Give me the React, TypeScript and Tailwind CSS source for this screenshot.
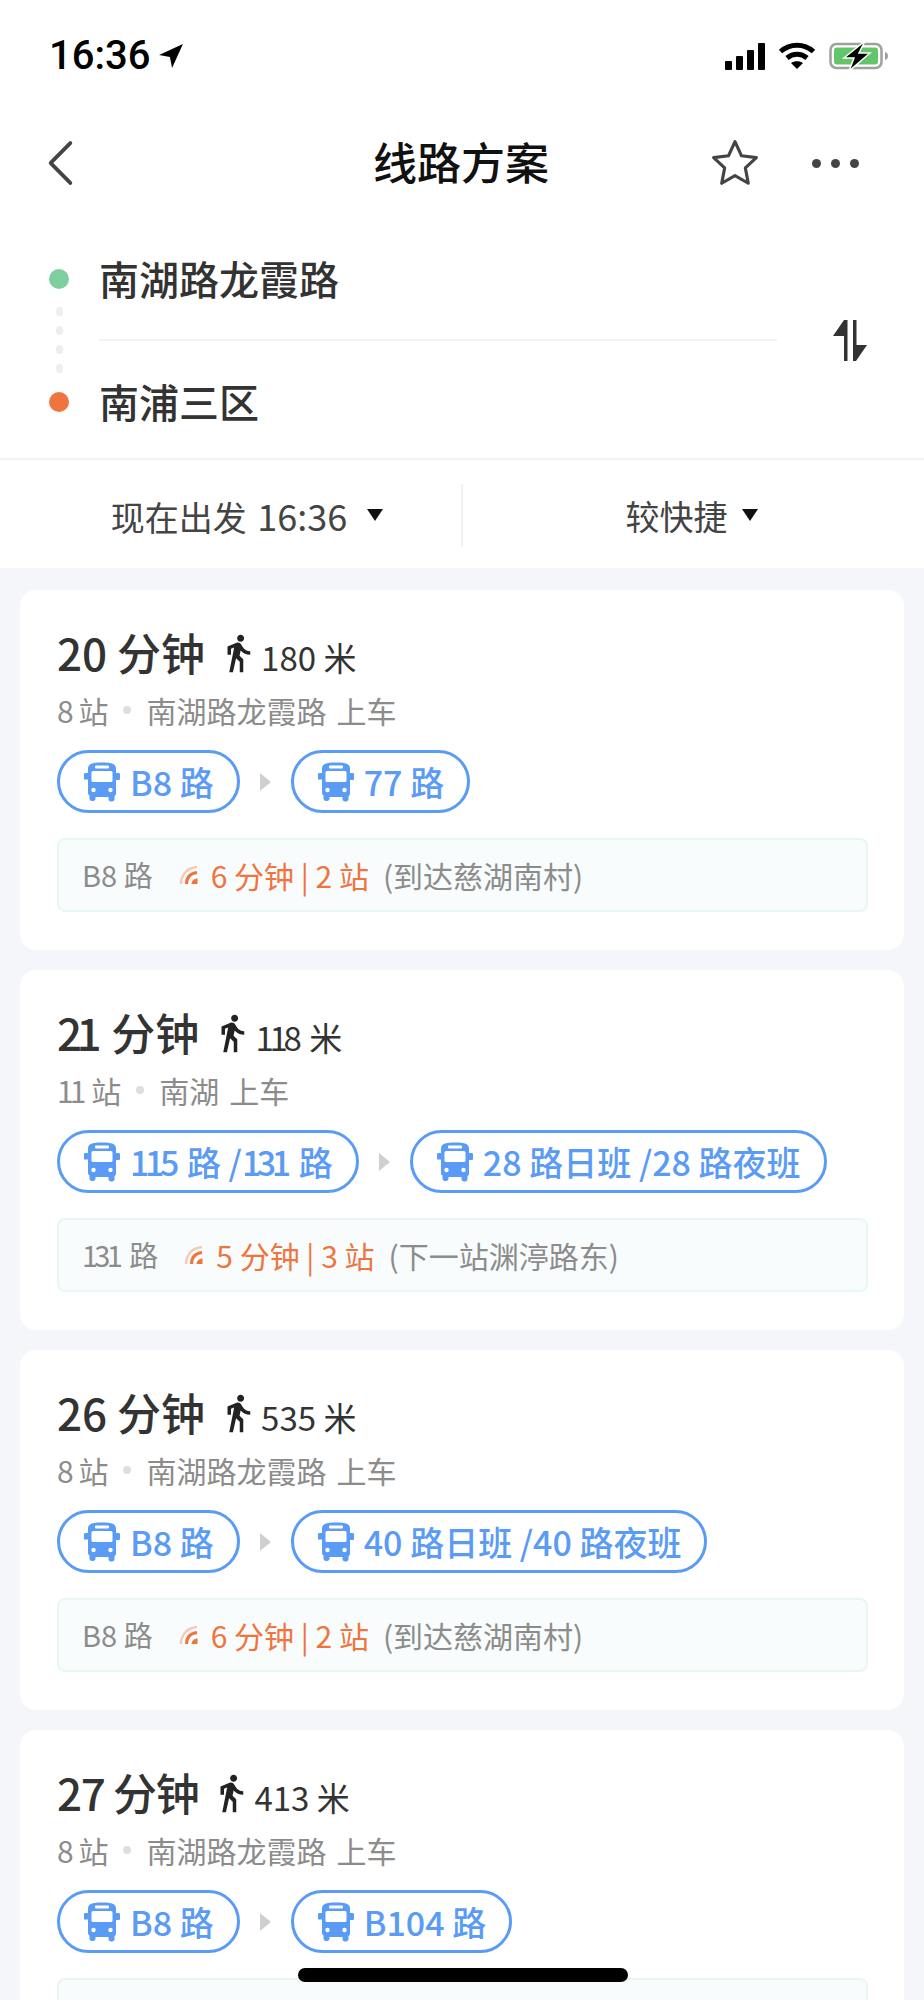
import { MdDirectionsWalk } from "react-icons/md";

type Plan = {
  mins: string;
  walk: string;
  stops: string;
  from: string;
  lines: string[];
  line: string;
  eta: string;
  etaStops: string;
  note: string;
  // the reference font sets these digits narrower than Noto's tabular ones
  tight?: boolean;
  minsClass?: string;
};

const plans: Plan[] = [
  { mins: "20", walk: "180", stops: "8", from: "南湖路龙霞路", lines: ["B8 路", "77 路"], line: "B8 路", eta: "6", etaStops: "2", note: "(到达慈湖南村)" },
  { mins: "21", walk: "118", stops: "11", from: "南湖", lines: ["115 路 /131 路", "28 路日班 /28 路夜班"], line: "131 路", eta: "5", etaStops: "3", note: "(下一站渊渟路东)", tight: true },
  { mins: "26", walk: "535", stops: "8", from: "南湖路龙霞路", lines: ["B8 路", "40 路日班 /40 路夜班"], line: "B8 路", eta: "6", etaStops: "2", note: "(到达慈湖南村)" },
  { mins: "27", walk: "413", stops: "8", from: "南湖路龙霞路", lines: ["B8 路", "B104 路"], line: "", eta: "", etaStops: "", note: "", minsClass: "tracking-[-0.03em]" },
];

function Digits({ text, tight }: { text: string; tight?: boolean }) {
  if (!tight) return <>{text}</>;
  return (
    <>
      {text.split(/(\d(?=1)|1(?=\d))/).map((part, i) =>
        i % 2 === 1 ? (
          <span key={i} className="tracking-[-0.13em]">{part}</span>
        ) : (
          part
        ),
      )}
    </>
  );
}

const BusIcon = () => (
  <svg viewBox="0 0 40 40" className="h-10 w-10 shrink-0" fill="#5a9bf6">
    <path d="M8 2.500C10 1 14 .5 20 .5s10 .5 12 2c1.500 1 2 2.500 2 4.500v4h2.500c1 0 1.500.6 1.500 1.500v4c0 1-.5 1.500-1.500 1.500H34v13c0 1.500-.5 2.500-1.500 3v3c0 1.500-1 2.500-2.500 2.500h-1c-1.500 0-2.500-1-2.500-2.500V35h-13v1.500c0 1.500-1 2.500-2.500 2.500h-1c-1.500 0-2.500-1-2.500-2.500v-3c-1-.5-1.500-1.500-1.500-3v-13H3.500C2.500 18 2 17.500 2 16.500v-4c0-.9.5-1.500 1.500-1.500H6V7c0-2 .5-3.500 2-4.500z" />
    <rect x="9.500" y="9" width="21" height="11" rx="1.500" fill="#fff" />
    <rect x="13" y="3.500" width="14" height="3" rx="1" fill="#fff" />
    <circle cx="11.500" cy="28" r="2.200" fill="#fff" />
    <circle cx="28.500" cy="28" r="2.200" fill="#fff" />
  </svg>
);

const LiveIcon = () => (
  <svg viewBox="0 0 20 20" className="h-5 w-5 shrink-0" fill="none">
    <path d="M2 19C2 10 8 3 18 2" stroke="#f6cbb6" strokeWidth="2.500" />
    <path d="M7.500 19C7.500 13 11 8.500 18 7.500" stroke="#f0743e" strokeWidth="3" />
    <path d="M12.500 19c0-3 2.500-5.500 6-5.500V19z" fill="#f0743e" />
  </svg>
);

function Card({ plan }: { plan: Plan }) {
  return (
    <div className="h-[360px] rounded-2xl bg-white pl-[37px] pr-9 pt-[37px]">
      <div className="flex h-[50px] items-center text-[#333]">
        <span className={`text-[44px] font-medium leading-[50px] ${plan.minsClass ?? ""}`}>
          <Digits text={plan.mins} tight={plan.tight} /> 分钟
        </span>
        <MdDirectionsWalk className="ml-[12px] mt-[2px] h-[42px] w-[42px] text-[#222]" />
        <span className="ml-[2px] mt-[10px] text-[33px] leading-[50px]">
          <Digits text={plan.walk} tight={plan.tight} /> 米
        </span>
      </div>
      <div className="mt-[15px] flex h-[36px] items-center text-[30px] leading-[36px] text-[#8c8c8c]">
        <span className="[word-spacing:-2px]">
          <Digits text={plan.stops} tight={plan.tight} /> 站
        </span>
        <span className="mx-[15px] h-2 w-2 rounded-full bg-[#dedede]" />
        <span>{plan.from}</span>
        <span className="ml-[10px]">上车</span>
      </div>
      <div className="mt-[22px] flex h-[63px] items-center">
        {plan.lines.map((name, i) => (
          <div key={name} className="flex items-center">
            {i > 0 && (
              <span className="mx-[20px] h-0 w-0 border-y-[9px] border-l-[11px] border-y-transparent border-l-[#cfcfcf]" />
            )}
            <div className="flex h-[63px] items-center gap-[8px] whitespace-nowrap rounded-full border-[3px] border-[#5a9bf6] pl-[22px] pr-[23px] text-[34px] font-medium text-[#5a9bf6]">
              <BusIcon />
              <span>
                <Digits text={name} tight={plan.tight} />
              </span>
            </div>
          </div>
        ))}
      </div>
      <div className="mt-[25px] flex h-[74px] items-center rounded-lg border-2 border-[#e9f7f3] bg-[#f8fcfc] pl-[23px] text-[29px] text-[#8c8c8c]">
        {plan.line && (
          <>
            <span>
              <Digits text={plan.line} tight={plan.tight} />
            </span>
            <span className="ml-[26px] mr-[12px]"><LiveIcon /></span>
            <span className="text-[30px] text-[#f0743e]">{plan.eta} 分钟 | {plan.etaStops} 站</span>
            <span className="ml-[14px] text-[30px]">{plan.note}</span>
          </>
        )}
      </div>
    </div>
  );
}

export default function App() {
  return (
    <div className="relative h-[2000px] w-[924px] overflow-hidden bg-[#f5f6fa] font-['Noto_Sans_CJK_SC',sans-serif]">
      <div className="bg-white">
        {/* status bar */}
        <div className="flex h-[110px] items-center justify-between pl-[49px] pr-[35px] pt-[2px]">
          <div className="flex items-center gap-[8px]">
            <span className="font-['Roboto',sans-serif] text-[40px] font-medium leading-none text-black">16:36</span>
            <svg viewBox="0 0 24 24" className="h-[26px] w-[26px]" fill="#000">
              <path d="M23 1L1 11l10 2 2 10z" />
            </svg>
          </div>
          <div className="flex items-center gap-[13px]">
            <div className="flex h-[27px] items-end gap-[4px]">
              <span className="h-[9px] w-[7px] rounded-[1px] bg-black" />
              <span className="h-[14px] w-[7px] rounded-[1px] bg-black" />
              <span className="h-[20px] w-[7px] rounded-[1px] bg-black" />
              <span className="h-[27px] w-[7px] rounded-[1px] bg-black" />
            </div>
            <svg viewBox="0 0 38 28" className="h-[28px] w-[38px]" fill="none" stroke="#000" strokeWidth="5">
              <path d="M2.500 9.500C12 1 26 1 35.500 9.500" />
              <path d="M9 16c6-5 14-5 20 0" />
              <path d="M19 27l-6-6c3.500-2.500 8.500-2.500 12 0z" fill="#000" stroke="none" />
            </svg>
            <svg viewBox="0 0 60 30" className="h-[30px] w-[60px]" fill="none">
              <rect x="1.500" y="3" width="51" height="24" rx="6" stroke="#a0a0a0" strokeWidth="2.500" />
              <rect x="5" y="6.500" width="44" height="17" rx="3" fill="#62c56a" />
              <path d="M56 11c2 .5 3 2 3 4s-1 3.500-3 4z" fill="#a0a0a0" />
              <path d="M36 0L15 17h10l-5 13 21-18H30z" fill="#000" stroke="#fff" strokeWidth="1.500" />
            </svg>
          </div>
        </div>
        {/* nav */}
        <div className="flex h-[106px] items-center pl-[47px] pr-[65px]">
          <div className="flex-1">
            <svg viewBox="0 0 30 48" className="h-12 w-[30px]" fill="none" stroke="#444" strokeWidth="4" strokeLinecap="round" strokeLinejoin="round">
              <path d="M26 4L4 24l22 20" transform="matrix(.9 0 0 1 0 0)" />
            </svg>
          </div>
          <span className="pb-[4px] pl-[16px] text-[44px] font-medium text-[#111]">线路方案</span>
          <div className="flex flex-1 items-center justify-end gap-[50px]">
            <svg viewBox="0 0 24 24" className="h-[54px] w-[54px]" fill="none" stroke="#444" strokeWidth="1.400" strokeLinejoin="round">
              <path d="M12 2.500l2.900 6.300 6.600.8-4.900 4.600 1.300 6.800L12 17.600 6.100 21l1.300-6.800L2.500 9.600l6.600-.8z" />
            </svg>
            <div className="flex gap-[10px]">
              <span className="h-[9px] w-[9px] rounded-full bg-[#444]" />
              <span className="h-[9px] w-[9px] rounded-full bg-[#444]" />
              <span className="h-[9px] w-[9px] rounded-full bg-[#444]" />
            </div>
          </div>
        </div>
        {/* route */}
        <div className="flex h-[244px] items-center border-b-2 border-[#f2f3f5] pt-[7px] pl-[49px] pr-[55px]">
          <div className="flex w-[20px] flex-col items-center">
            <span className="h-[20px] w-[20px] rounded-full bg-[#7dd09e]" />
            <div className="mb-[19px] mt-[18px] flex flex-col gap-[10px]">
              <span className="h-[9px] w-[7px] rounded-full bg-[#eeeeee]" />
              <span className="h-[9px] w-[7px] rounded-full bg-[#eeeeee]" />
              <span className="h-[9px] w-[7px] rounded-full bg-[#eeeeee]" />
              <span className="h-[9px] w-[7px] rounded-full bg-[#eeeeee]" />
            </div>
            <span className="h-[20px] w-[20px] rounded-full bg-[#f0743e]" />
          </div>
          <div className="ml-[30px] w-[678px] text-[40px] font-medium text-[#333]">
            <div className="flex h-[112px] items-center border-b-2 border-[#f2f3f5] pb-[12px]">南湖路龙霞路</div>
            <div className="flex h-[112px] items-center pt-[8px]">南浦三区</div>
          </div>
          <svg viewBox="0 0 36 42" className="ml-[55px] h-[42px] w-[36px]" fill="#333">
            <path d="M12 0h3.500v41H12V16H1z" />
            <path d="M21 0h3.500v25H35L24 41h-3z" />
          </svg>
        </div>
        {/* filters */}
        <div className="flex h-[108px] items-center pt-[2px] text-[34px] text-[#444]">
          <div className="flex w-[461px] items-center justify-center gap-[20px] pl-[33px]">
            <span>现在出发 <span className="ml-[3px] text-[36px]">16:36</span></span>
            <span className="h-0 w-0 border-x-[8px] border-t-[12px] border-x-transparent border-t-[#111]" />
          </div>
          <div className="h-[62px] w-[2px] bg-[#f0f0f0]" />
          <div className="flex flex-1 items-center justify-center gap-[14px] pr-[4px]">
            <span>较快捷</span>
            <span className="h-0 w-0 border-x-[8px] border-t-[12px] border-x-transparent border-t-[#111]" />
          </div>
        </div>
      </div>
      <div className="flex flex-col gap-[20px] px-5 pt-[22px]">
        {plans.map((p) => (
          <Card key={p.mins} plan={p} />
        ))}
      </div>
      <div className="absolute bottom-[18px] left-[298px] h-[14px] w-[330px] rounded-full bg-black" />
    </div>
  );
}
